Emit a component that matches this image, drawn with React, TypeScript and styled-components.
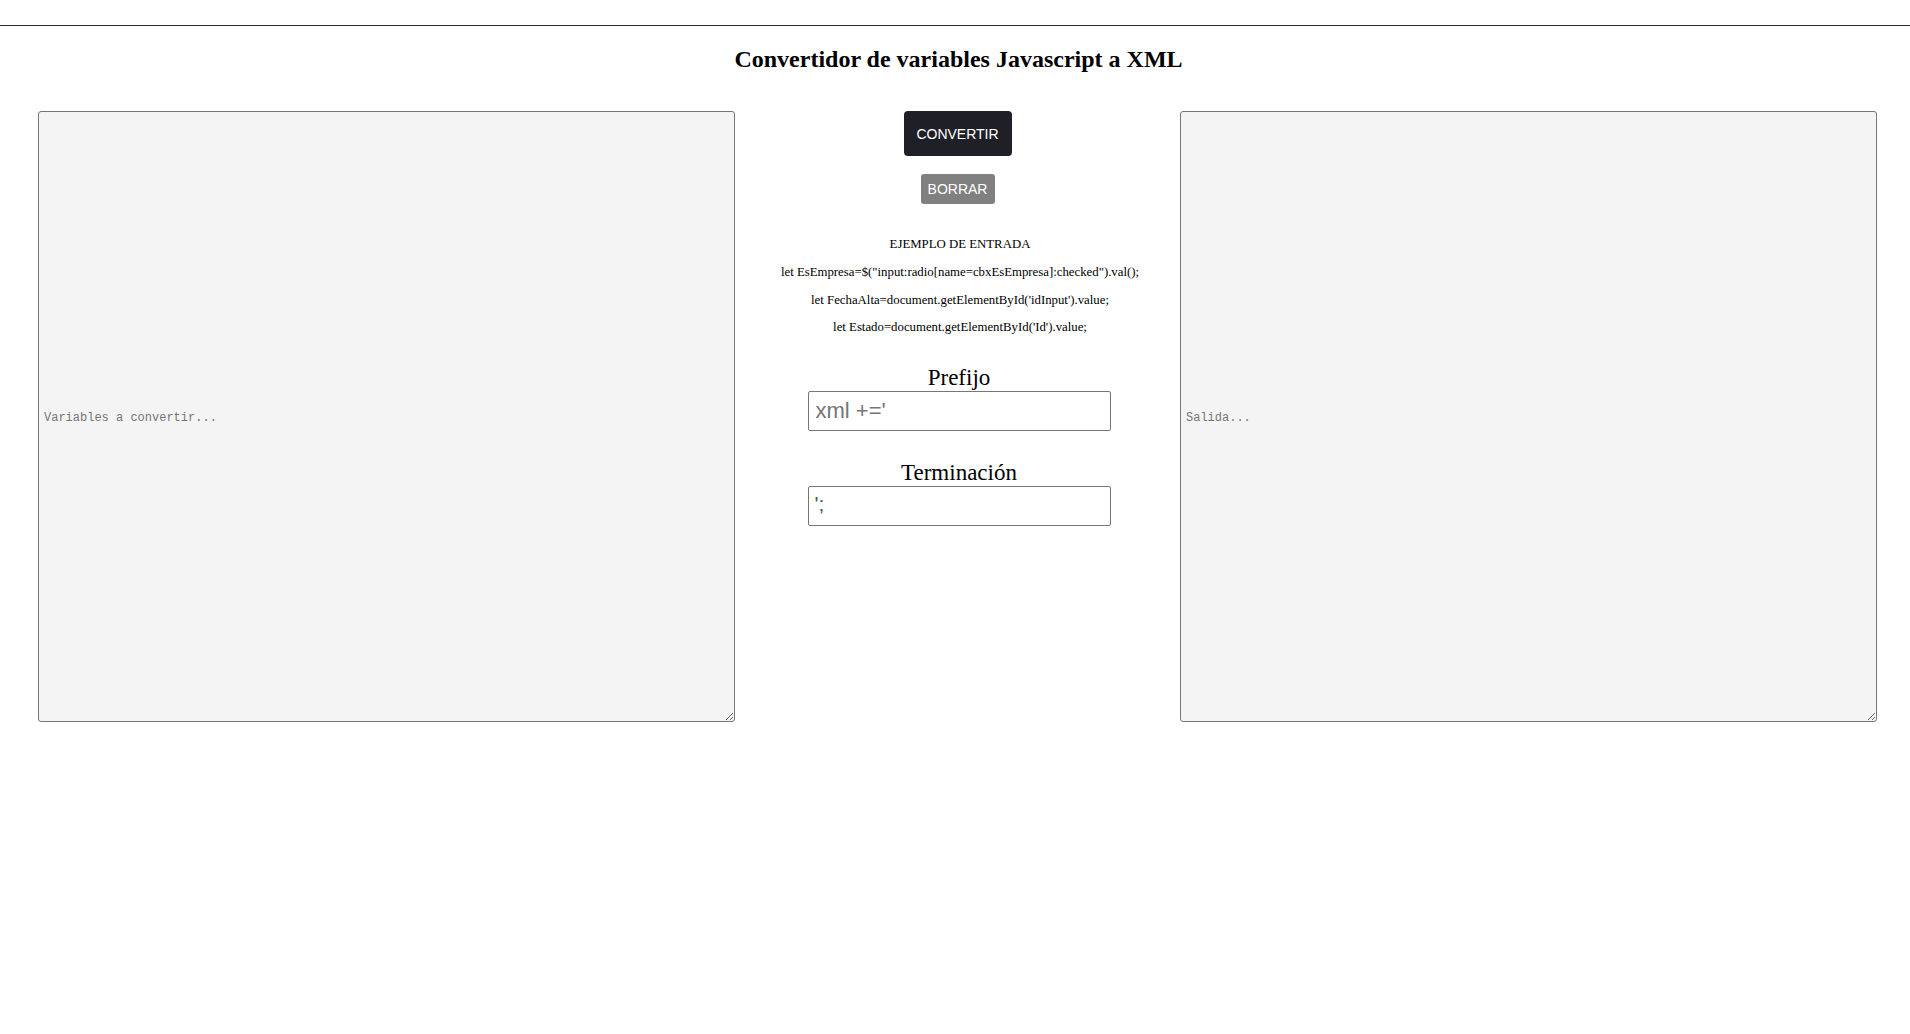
import React from "react";
import styled, { createGlobalStyle } from "styled-components";

const Global = createGlobalStyle`
  html, body { margin: 0; padding: 0; background: #ffffff; }
  body { font-family: "Liberation Serif", "Times New Roman", serif; color: #000; }
`;

const TopBar = styled.header`
  height: 25px;
  border-bottom: 1px solid #2a2a2a;
`;

const Title = styled.h2`
  margin: 19px 0 0;
  padding-left: 7px;
  font-size: 24px;
  line-height: 28px;
  font-weight: bold;
  text-align: center;
`;

const Main = styled.main`
  display: grid;
  grid-template-columns: 697px 445px 697px;
  padding-left: 38px;
  margin-top: 38px;
  align-items: start;
`;

const Area = styled.textarea`
  box-sizing: border-box;
  width: 697px;
  height: 611px;
  margin: 0;
  background: #f4f4f4;
  border: 1px solid #767676;
  border-radius: 3px;
  padding: 299px 5px 0;
  font-family: "Liberation Mono", "Courier New", monospace;
  font-size: 12px;
  line-height: 14px;
  color: #222;
  resize: both;
  outline: none;
  &::placeholder { color: #757575; }
`;

const Center = styled.section`
  display: flex;
  flex-direction: column;
  align-items: center;
`;

const Button = styled.button<{ $variant: "dark" | "gray" }>`
  font-family: "Liberation Sans", Arial, sans-serif;
  color: #ffffff;
  border: none;
  cursor: pointer;
  background: ${(p) => (p.$variant === "dark" ? "#1f1f28" : "#808080")};
  height: ${(p) => (p.$variant === "dark" ? "45px" : "30px")};
  width: ${(p) => (p.$variant === "dark" ? "108px" : "74px")};
  border-radius: ${(p) => (p.$variant === "dark" ? "4px" : "3px")};
  font-size: 14px;
  padding: 0;
  margin-top: ${(p) => (p.$variant === "dark" ? "0" : "18px")};
`;

const Examples = styled.div`
  margin: 33px 0 0 5px;
  display: flex;
  flex-direction: column;
  align-items: center;
  gap: 12.8px;
  font-size: 12.8px;
  line-height: 15px;
  text-align: center;
`;

const ExLine = styled.p`
  margin: 0;
  white-space: nowrap;
`;

const Label = styled.label<{ $top: number }>`
  display: block;
  font-size: 23px;
  line-height: 26px;
  text-align: center;
  margin-top: ${(p) => p.$top}px;
`;

const Field = styled.div`
  display: flex;
  flex-direction: column;
  align-items: center;
  margin-left: 3px;
`;

const TextInput = styled.input`
  box-sizing: border-box;
  width: 303px;
  height: 40px;
  margin: 0;
  border: 1px solid #767676;
  border-radius: 2px;
  padding: 0 7px;
  font-family: "Liberation Sans", Arial, sans-serif;
  font-size: 22px;
  color: #222;
  outline: none;
  &::placeholder { color: #757575; }
`;

const SmallArea = styled.textarea`
  box-sizing: border-box;
  width: 303px;
  height: 40px;
  margin: 0;
  border: 1px solid #767676;
  border-radius: 2px;
  padding: 5px 6px 0;
  font-family: "Liberation Sans", Arial, sans-serif;
  font-size: 21px;
  line-height: 24px;
  color: #555;
  resize: none;
  outline: none;
  overflow: hidden;
  &::placeholder { color: #757575; }
`;

export default function App() {
  return (
    <>
      <Global />
      <TopBar />
      <Title>Convertidor de variables Javascript a XML</Title>
      <Main>
        <Area placeholder="Variables a convertir..." />
        <Center>
          <Button $variant="dark">CONVERTIR</Button>
          <Button $variant="gray">BORRAR</Button>
          <Examples>
            <ExLine>EJEMPLO DE ENTRADA</ExLine>
            <ExLine>let EsEmpresa=$("input:radio[name=cbxEsEmpresa]:checked").val();</ExLine>
            <ExLine>let FechaAlta=document.getElementById('idInput').value;</ExLine>
            <ExLine>let Estado=document.getElementById('Id').value;</ExLine>
          </Examples>
          <Field>
            <Label $top={30}>Prefijo</Label>
            <TextInput placeholder="xml +='" />
          </Field>
          <Field>
            <Label $top={29}>Terminación</Label>
            <SmallArea defaultValue="';" />
          </Field>
        </Center>
        <Area placeholder="Salida..." />
      </Main>
    </>
  );
}
